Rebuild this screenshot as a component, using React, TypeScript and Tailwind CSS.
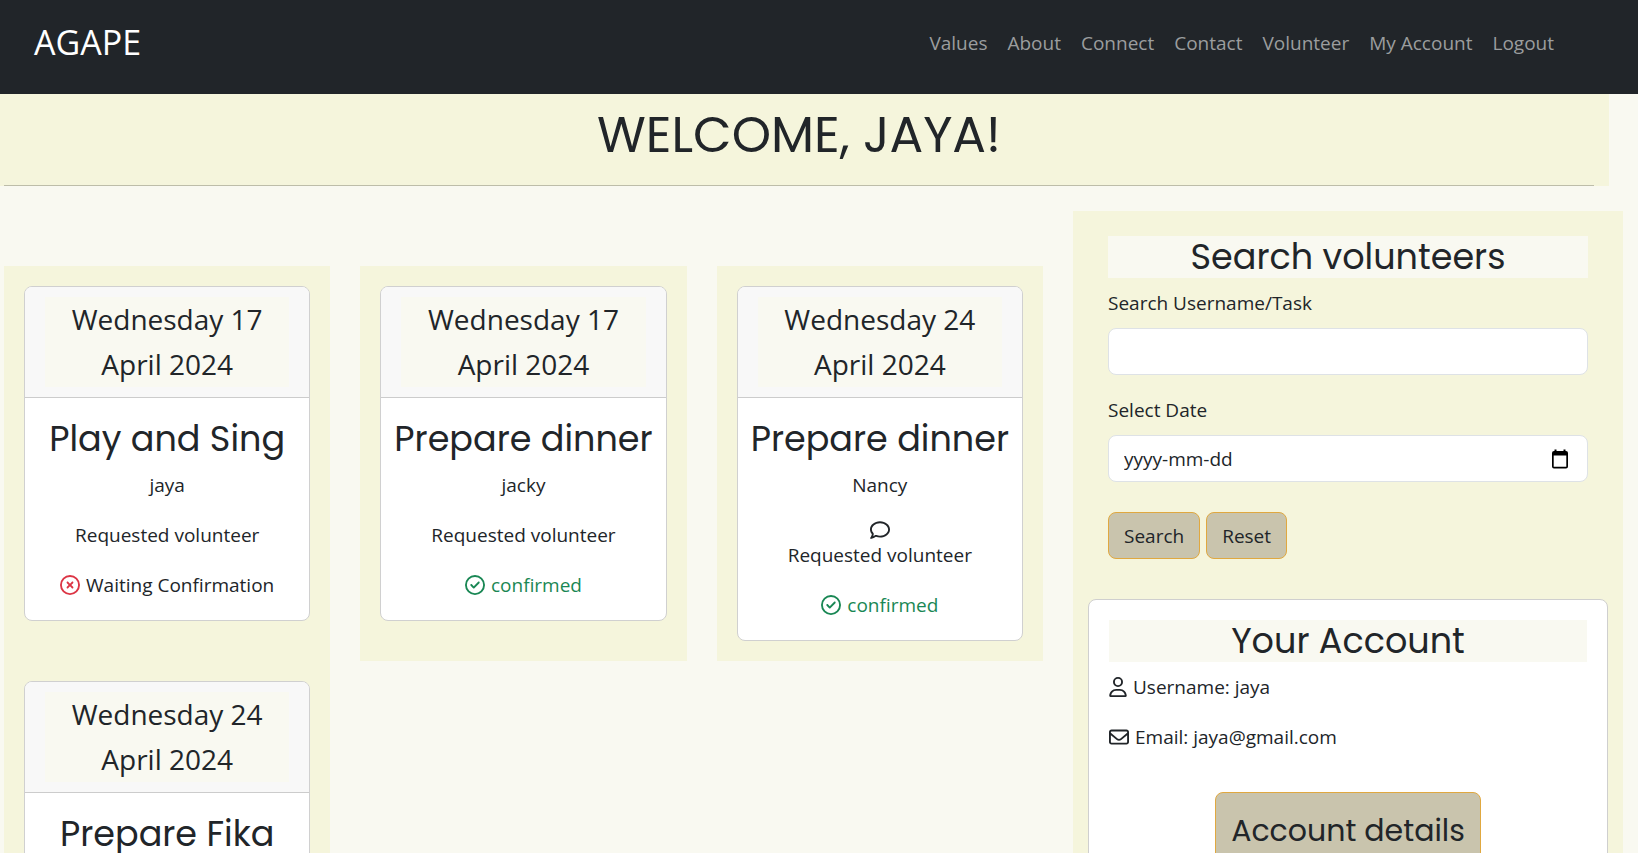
import type { ReactNode } from "react";
import {
  FaRegCircleCheck,
  FaRegCircleXmark,
  FaRegComment,
  FaRegEnvelope,
  FaRegUser,
} from "react-icons/fa6";

const DISPLAY = "font-['Poppins','Inter',sans-serif] [font-feature-settings:'cv11'] font-normal";

const links = ["Values", "About", "Connect", "Contact", "Volunteer", "My Account", "Logout"];

type Task = {
  date: string;
  title: string;
  user: string;
  comment?: boolean;
  confirmed?: boolean;
};

const tasks: Task[] = [
  { date: "Wednesday 17 April 2024", title: "Play and Sing", user: "jaya" },
  { date: "Wednesday 17 April 2024", title: "Prepare dinner", user: "jacky", confirmed: true },
  { date: "Wednesday 24 April 2024", title: "Prepare dinner", user: "Nancy", comment: true, confirmed: true },
  { date: "Wednesday 24 April 2024", title: "Prepare Fika", user: "jaya", confirmed: true },
];

function TaskCard({ task }: { task: Task }) {
  return (
    <article className="bg-[#f5f5dc] p-5">
      <div className="overflow-hidden rounded-lg border border-[#d0d0d0] bg-white text-center">
        <header className="border-b border-[#cccccc] bg-[#f8f8f8] px-5 py-2.5">
          <p className="bg-[#f9f9f1] px-4 text-[28px] leading-[45px]">{task.date}</p>
        </header>
        <div className="px-2 py-5">
          <h2 className={`${DISPLAY} mb-2.5 text-[35px] leading-[42px] whitespace-nowrap`}>{task.title}</h2>
          <p className="mb-5">{task.user}</p>
          {task.comment && <FaRegComment className="mx-auto block" size={20} />}
          <p className="mb-5">Requested volunteer</p>
          {task.confirmed ? (
            <p className="flex items-center justify-center gap-1.5 text-[#198754]">
              <FaRegCircleCheck size={20} />
              confirmed
            </p>
          ) : (
            <p className="flex items-center justify-center gap-1.5">
              <FaRegCircleXmark size={20} className="text-[#dc3545]" />
              Waiting Confirmation
            </p>
          )}
        </div>
      </div>
    </article>
  );
}

function PanelHeading({ children }: { children: ReactNode }) {
  return (
    <h2 className={`${DISPLAY} mb-2.5 bg-[#f9f9f1] text-center text-[35px] leading-[42px]`}>{children}</h2>
  );
}

function CalendarIcon() {
  return (
    <svg viewBox="0 0 16 20" className="h-5 w-4" aria-hidden="true">
      <path
        fillRule="evenodd"
        fill="#000"
        d="M2.5 0.5h2V2h7V0.5h2V2h.5a2 2 0 0 1 2 2v13.500a2 2 0 0 1-2 2H2a2 2 0 0 1-2-2V4a2 2 0 0 1 2-2h.5zM1.700 6.500V17.700h12.600V6.500z"
      />
    </svg>
  );
}

const FIELD =
  "h-[47px] w-full rounded-lg border border-[#dee2e6] bg-white px-[15px] text-[19px] text-[#212529] placeholder:text-[#212529] placeholder:opacity-100";
const BUTTON = "rounded-lg border border-[#e0a840] bg-[#c9c4ad] px-[15px]";

export default function App() {
  return (
    <div className="min-h-screen bg-[#f9f9f1] font-['Segoe_UI','Open_Sans',sans-serif] text-[19px] leading-[30px] text-[#212529]">
      <nav className="flex items-center justify-between bg-[#212529] pt-4 pr-[84px] pb-[26px] pl-[34px]">
        <a href="#home" className="text-[34px] leading-[52px] text-white">
          AGAPE
        </a>
        <ul className="flex gap-5 pt-0.5">
          {links.map((link) => (
            <li key={link}>
              <a href="#home" className="text-[#9b9d9e]">
                {link}
              </a>
            </li>
          ))}
        </ul>
      </nav>

      <header className="mr-[29px] bg-[#f5f5dc] pt-[11px] pr-[15px] pl-1">
        <h1 className={`${DISPLAY} pb-5 text-center text-[50px] leading-[60px]`}>WELCOME, JAYA!</h1>
        <hr className="border-[#bdbda9]" />
      </header>

      <main className="mt-[25px] grid grid-cols-[1039fr_550fr] items-start gap-[30px] pr-[15px] pl-1">
        <section className="mt-[55px] grid grid-cols-3 gap-x-[30px]">
          {tasks.map((task, i) => (
            <TaskCard key={i} task={task} />
          ))}
        </section>

        <aside className="bg-[#f5f5dc] px-[15px] pt-[25px] pb-10">
          <form className="mb-10 px-5">
            <PanelHeading>Search volunteers</PanelHeading>
            <label htmlFor="search" className="mb-2.5 block">
              Search Username/Task
            </label>
            <input id="search" type="text" className={`${FIELD} mb-5`} />
            <label htmlFor="date" className="mb-2.5 block">
              Select Date
            </label>
            <div className="relative mb-[30px]">
              <input id="date" type="text" placeholder="yyyy-mm-dd" className={FIELD} />
              <button type="button" aria-label="Open calendar" className="absolute inset-y-0 right-5 flex items-center">
                <CalendarIcon />
              </button>
            </div>
            <div className="flex gap-1.5">
              <button type="submit" className={`${BUTTON} h-[47px]`}>
                Search
              </button>
              <button type="reset" className={`${BUTTON} h-[47px]`}>
                Reset
              </button>
            </div>
          </form>

          <section className="rounded-lg border border-[#cfcfcf] bg-white p-5">
            <PanelHeading>Your Account</PanelHeading>
            <p className="mb-5 flex items-center gap-1.5">
              <FaRegUser className="h-5 w-[18px]" />
              Username: jaya
            </p>
            <p className="mb-10 flex items-center gap-1.5">
              <FaRegEnvelope size={20} />
              Email: jaya@gmail.com
            </p>
            <div className="text-center">
              <button type="button" className={`${BUTTON} ${DISPLAY} pt-5 pb-[30px] text-[30px] leading-[36px]`}>
                Account details
              </button>
            </div>
          </section>
        </aside>
      </main>
    </div>
  );
}
